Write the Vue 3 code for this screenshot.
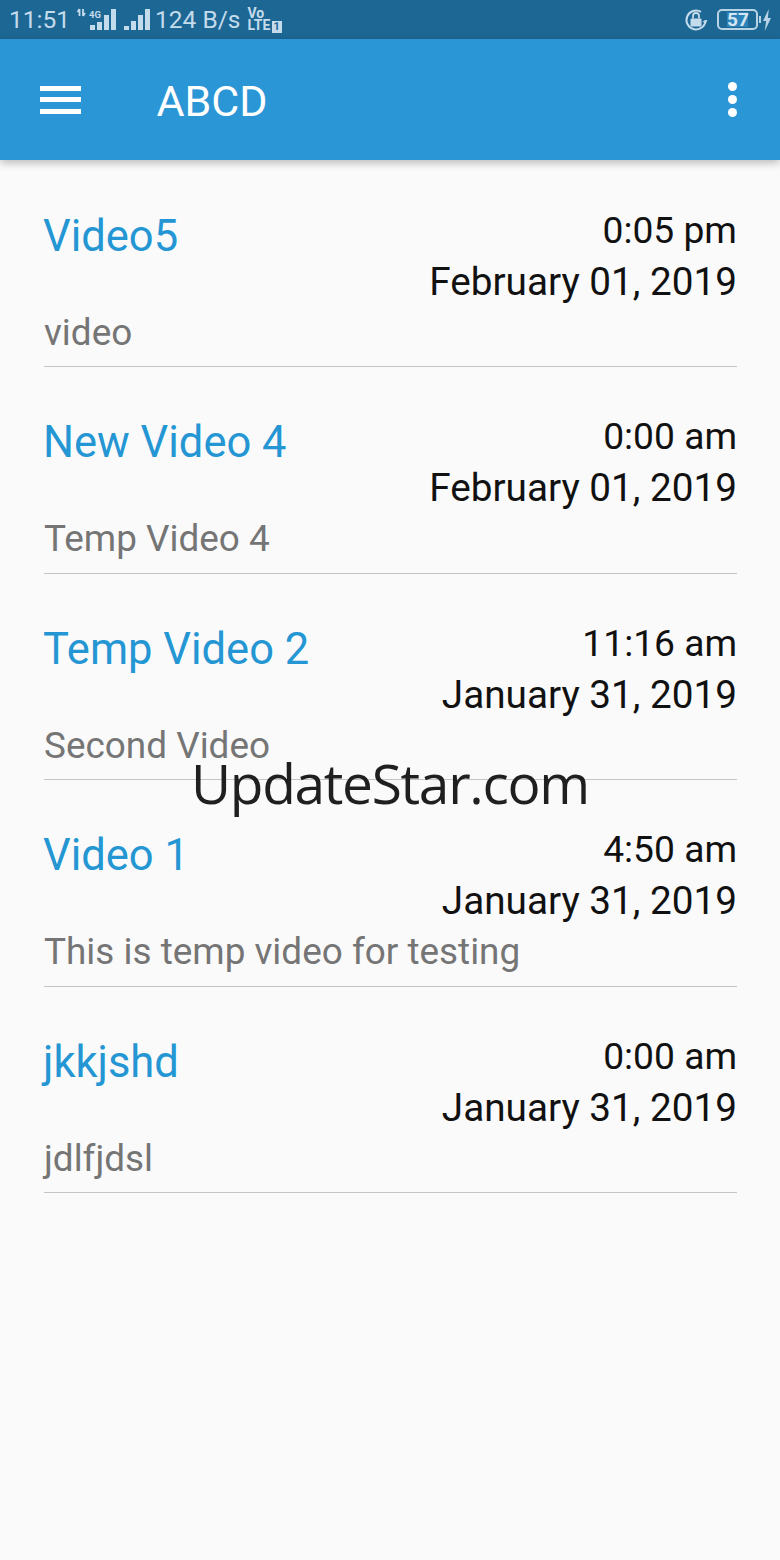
<script setup>
const videos = [
  { title: 'Video5', time: '0:05 pm', date: 'February 01, 2019', desc: 'video' },
  { title: 'New Video 4', time: '0:00 am', date: 'February 01, 2019', desc: 'Temp Video 4' },
  { title: 'Temp Video 2', time: '11:16 am', date: 'January 31, 2019', desc: 'Second Video' },
  { title: 'Video 1', time: '4:50 am', date: 'January 31, 2019', desc: 'This is temp video for testing' },
  { title: 'jkkjshd', time: '0:00 am', date: 'January 31, 2019', desc: 'jdlfjdsl' }
]
</script>

<template>
  <div class="screen">
    <div class="status-bar">
      <div class="status-left">
        <span class="clock">11:51</span>
        <svg class="signal-one" width="39" height="24" viewBox="0 0 39 24">
          <path d="M2.500 1v7M0.500 4 2.500 1M6 1v7M6 8l2-3" stroke="#c4dbec" stroke-width="1.800" fill="none" />
          <text x="12" y="9.500" class="tiny">4G</text>
          <rect x="13" y="17" width="5" height="5" fill="#c4dbec" />
          <rect x="20" y="14" width="5" height="8" fill="#c4dbec" />
          <rect x="27" y="7" width="5" height="15" fill="#c4dbec" />
          <rect x="34" y="1" width="5" height="21" fill="#c4dbec" />
        </svg>
        <svg class="signal-two" width="27" height="24" viewBox="0 0 27 24">
          <rect x="1" y="18" width="5" height="4" fill="#c4dbec" />
          <rect x="8" y="13" width="5" height="9" fill="#c4dbec" />
          <rect x="15" y="7" width="5" height="15" fill="#c4dbec" />
          <rect x="22" y="1" width="5" height="21" fill="#c4dbec" />
        </svg>
        <span class="speed">124 B/s</span>
        <div class="volte">
          <span class="vo">Vo</span>
          <span class="lte">LTE<i class="sim">1</i></span>
        </div>
      </div>
      <div class="status-right">
        <svg width="24" height="24" viewBox="0 0 24 24">
          <path d="M21.500 12A9.500 9.500 0 1 1 17 3.900" stroke="#c4dbec" stroke-width="2" fill="none" />
          <path d="M18.500 13.500 21.500 16 23.500 12z" fill="#c4dbec" />
          <rect x="6.500" y="10.500" width="11" height="8" rx="1" fill="#c4dbec" />
          <path d="M9 10.500V8a3 3 0 0 1 6 0v2.500" stroke="#c4dbec" stroke-width="1.800" fill="none" />
        </svg>
        <div class="battery"><span>57</span></div>
        <div class="battery-nub"></div>
        <svg class="bolt" width="8" height="22" viewBox="0 0 9 22" preserveAspectRatio="none">
          <path d="M6.500 0 0 12h3.500L2 22 9 9H5.500z" fill="#b9d3e6" />
        </svg>
      </div>
    </div>

    <header class="toolbar">
      <div class="menu-icon">
        <span></span><span></span><span></span>
      </div>
      <h1 class="app-title">ABCD</h1>
      <div class="more-icon">
        <span></span><span></span><span></span>
      </div>
    </header>

    <main class="list">
      <div v-for="video in videos" :key="video.title + video.time" class="row">
        <div class="row-top">
          <div class="title">{{ video.title }}</div>
          <div class="when">
            <div class="time">{{ video.time }}</div>
            <div class="date">{{ video.date }}</div>
          </div>
        </div>
        <div class="desc">{{ video.desc }}</div>
      </div>
    </main>

    <div class="watermark">UpdateStar.com</div>
  </div>
</template>

<style>
html, body {
  margin: 0;
  background: #fafafa;
}
</style>

<style scoped>
.screen {
  position: relative;
  width: 780px;
  height: 1560px;
  overflow: hidden;
  background: #fafafa;
  font-family: Roboto, "Liberation Sans", sans-serif;
}

.status-bar {
  height: 39px;
  box-sizing: border-box;
  padding: 0 9px 0 9px;
  background: #1d6794;
  display: flex;
  align-items: center;
  justify-content: space-between;
  color: #c4dbec;
}

.status-left,
.status-right {
  display: flex;
  align-items: center;
}

.clock {
  font-size: 24.5px;
}

.signal-one {
  margin-left: 7px;
}

.signal-two {
  margin-left: 7px;
}

.tiny {
  font-size: 9.500px;
  font-weight: 700;
  fill: #c4dbec;
}

.speed {
  margin-left: 5px;
  font-size: 24.5px;
}

.volte {
  margin-left: 7px;
  display: flex;
  flex-direction: column;
  font-weight: 700;
}

.vo {
  font-size: 14px;
  line-height: 12px;
}

.lte {
  font-size: 14px;
  line-height: 12px;
  letter-spacing: 0.2px;
}

.sim {
  font-style: normal;
  display: inline-block;
  margin-left: 1px;
  padding: 0 2px;
  background: #c4dbec;
  color: #1d6794;
  font-size: 11px;
  line-height: 12px;
}

.battery {
  margin-left: 9px;
  width: 41px;
  height: 21px;
  box-sizing: border-box;
  border: 2px solid #b9d3e6;
  border-radius: 5px;
  display: flex;
  align-items: center;
  font-size: 19px;
  font-weight: 700;
}

.battery span {
  margin-left: 8px;
  width: 21px;
  text-align: center;
  background: #2d82ba;
  line-height: 15px;
  color: #d5e6f2;
}

.battery-nub {
  width: 2px;
  height: 7px;
  margin-left: 1px;
  background: #b9d3e6;
}

.bolt {
  margin-left: 2px;
}

.toolbar {
  position: relative;
  height: 121px;
  background: #2b96d6;
  box-shadow: 0 3px 8px rgba(0, 0, 0, 0.25);
  display: flex;
  align-items: center;
  color: #fff;
}

.menu-icon {
  margin-left: 40px;
  width: 41px;
  display: flex;
  flex-direction: column;
  gap: 6.5px;
}

.menu-icon span {
  height: 5px;
  background: #fff;
}

.app-title {
  margin: 3px 0 0 75.500px;
  font-size: 43px;
  font-weight: 400;
  line-height: 1;
}

.more-icon {
  margin-left: auto;
  margin-right: 43px;
  display: flex;
  flex-direction: column;
  gap: 4px;
}

.more-icon span {
  width: 9px;
  height: 9px;
  border-radius: 50%;
  background: #fff;
}

.list {
  padding: 1px 43px 0 44px;
}

.row {
  height: 206.4px;
  box-sizing: border-box;
  padding-top: 46px;
  border-bottom: 1.5px solid #c4c4c4;
}

.row-top {
  display: flex;
  justify-content: space-between;
}

.title {
  margin-top: 2px;
  margin-left: -1px;
  font-size: 43.5px;
  line-height: 56px;
  color: #2496d3;
}

.when {
  margin-top: -2px;
  text-align: right;
  color: #111;
}

.time {
  font-size: 37.2px;
  line-height: 51px;
}

.date {
  font-size: 38.7px;
  line-height: 51px;
}

.desc {
  margin-top: 1px;
  font-size: 36.9px;
  line-height: 49px;
  color: #757575;
}

.watermark {
  position: absolute;
  left: 0;
  right: 0;
  top: 745px;
  text-align: center;
  font-family: "Open Sans", sans-serif;
  font-size: 55px;
  letter-spacing: -1.3px;
  line-height: 76px;
  color: #1f1f1f;
}
</style>
